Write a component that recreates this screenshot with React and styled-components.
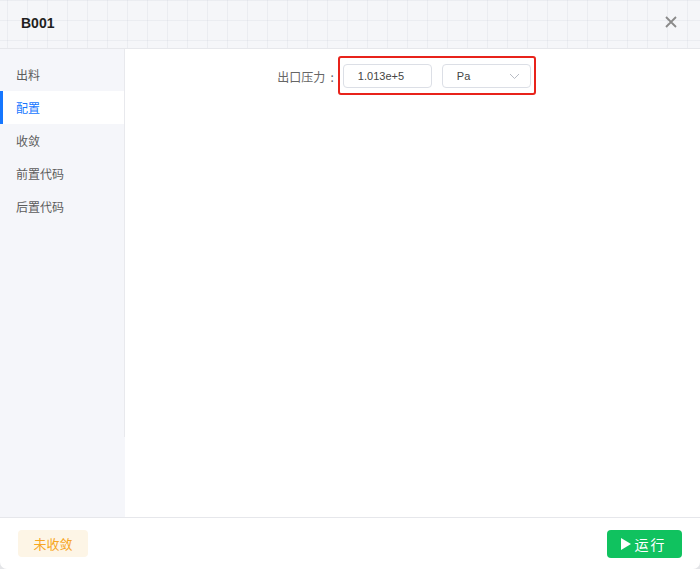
import React from "react"
import styled, { createGlobalStyle } from "styled-components"

const Global = createGlobalStyle`
    html, body {
        margin: 0;
        padding: 0;
        background: #e4e5e8;
        font-family: "Noto Sans CJK SC", "Liberation Sans", sans-serif;
    }
`

const Dialog = styled.div`
    width: 700px;
    height: 569px;
    background: #fff;
    border-radius: 0 0 7px 7px;
    overflow: hidden;
    display: flex;
    flex-direction: column;
`

const Header = styled.header`
    height: 48px;
    flex-shrink: 0;
    display: flex;
    align-items: center;
    justify-content: space-between;
    padding: 0 23px 0 21px;
    border-bottom: 1px solid #e6e7eb;
    background-color: #f5f6f9;
    background-image:
        linear-gradient(to right, rgba(200, 204, 214, 0.22) 1px, transparent 1px),
        linear-gradient(to bottom, rgba(200, 204, 214, 0.22) 1px, transparent 1px);
    background-size: 20px 20px;
    background-position: 7px 0;
`

const Title = styled.h1`
    margin: 0;
    font-family: "Liberation Sans", Arial, sans-serif;
    font-size: 14px;
    font-weight: 700;
    color: #1f1f1f;
    padding-bottom: 3px;
`

const Close = styled.button`
    border: 0;
    background: none;
    padding: 0;
    width: 12px;
    height: 12px;
    margin-bottom: 5px;
    cursor: pointer;
    display: flex;
`

const Body = styled.div`
    flex: 1;
    display: flex;
    min-height: 0;
`

const Side = styled.nav`
    width: 125px;
    flex-shrink: 0;
    background: #f5f6fa;
    display: flex;
    flex-direction: column;
`

const Menu = styled.ul`
    list-style: none;
    margin: 0;
    padding: 9px 0 0;
    height: 379px;
    border-right: 1px solid #e8e9ed;
`

const Item = styled.li`
    height: 33px;
    display: flex;
    align-items: center;
    padding-left: 16px;
    font-size: 12px;
    color: ${p => (p.active ? "#1677ff" : "#5c5c5c")};
    background: ${p => (p.active ? "#fff" : "transparent")};
    box-shadow: ${p => (p.active ? "inset 3px 0 0 #1677ff" : "none")};
    cursor: pointer;
`

const Main = styled.main`
    flex: 1;
    padding-top: 7px;
`

const Row = styled.div`
    display: flex;
    align-items: center;
    justify-content: center;
    padding-right: 12px;
`

const Label = styled.label`
    font-size: 12px;
    color: #666;
    margin-right: 4px;
    margin-top: 1px;
    white-space: pre;
`

const Highlight = styled.div`
    display: flex;
    gap: 10px;
    padding: 6px 3px 5px;
    border: 2px solid #e8231b;
    border-radius: 3px;
`

const Field = styled.div`
    width: 89px;
    height: 24px;
    box-sizing: border-box;
    border: 1px solid #dcdfe6;
    border-radius: 4px;
    display: flex;
    align-items: center;
    justify-content: space-between;
    padding: 0 10px 0 14px;
    font-family: "Liberation Sans", Arial, sans-serif;
    font-size: 11px;
    color: #444;
    background: #fff;
`

const Footer = styled.footer`
    height: 51px;
    flex-shrink: 0;
    border-top: 1px solid #e6e7eb;
    display: flex;
    align-items: center;
    justify-content: space-between;
    padding: 0 18px;
`

const Status = styled.span`
    width: 70px;
    height: 27px;
    border-radius: 4px;
    background: #fdf5e6;
    color: #f7a623;
    font-size: 13px;
    display: flex;
    align-items: center;
    justify-content: center;
`

const Run = styled.button`
    width: 75px;
    height: 28px;
    border: 0;
    border-radius: 4px;
    background: #10c25f;
    color: #fff;
    font-family: inherit;
    font-size: 14px;
    letter-spacing: 2px;
    display: flex;
    align-items: center;
    justify-content: center;
    gap: 4px;
    padding-left: 4px;
    cursor: pointer;
`

const menu = ["出料", "配置", "收敛", "前置代码", "后置代码"]

export default function App() {
    return (
        <>
            <Global />
            <Dialog>
                <Header>
                    <Title>B001</Title>
                    <Close aria-label="close">
                        <svg width="12" height="12" viewBox="0 0 12 12">
                            <path d="M1 1 L11 11 M11 1 L1 11" stroke="#8a8a8a" strokeWidth="1.8" />
                        </svg>
                    </Close>
                </Header>
                <Body>
                    <Side>
                        <Menu>
                            {menu.map(m => (
                                <Item key={m} active={m === "配置"}>{m}</Item>
                            ))}
                        </Menu>
                    </Side>
                    <Main>
                        <Row>
                            <Label>出口压力  :</Label>
                            <Highlight>
                                <Field>1.013e+5</Field>
                                <Field>
                                    Pa
                                    <svg width="11" height="7" viewBox="0 0 11 7">
                                        <path d="M1 1 L5.5 5.5 L10 1" stroke="#b8bcc4" strokeWidth="1" fill="none" />
                                    </svg>
                                </Field>
                            </Highlight>
                        </Row>
                    </Main>
                </Body>
                <Footer>
                    <Status>未收敛</Status>
                    <Run>
                        <svg width="10" height="12" viewBox="0 0 10 12">
                            <path d="M0 0 L10 6 L0 12 Z" fill="#fff" />
                        </svg>
                        运行
                    </Run>
                </Footer>
            </Dialog>
        </>
    )
}
